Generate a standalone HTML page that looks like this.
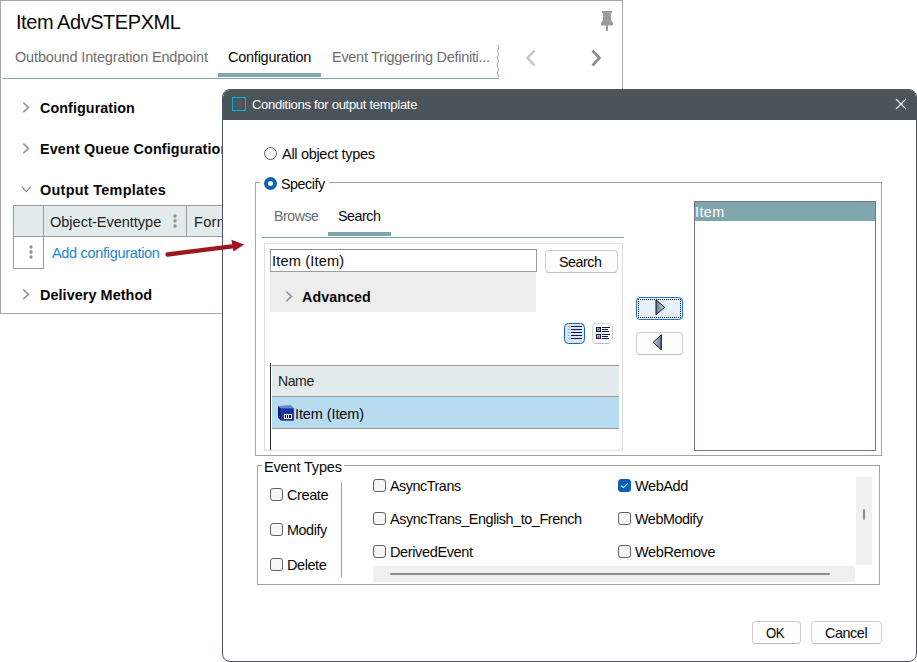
<!DOCTYPE html>
<html><head><meta charset="utf-8">
<style>
*{box-sizing:border-box;margin:0;padding:0}
html,body{width:917px;height:662px;overflow:hidden;background:#fff}
body{position:relative;font-family:"Liberation Sans",sans-serif;color:#111;font-size:14px}
.abs{position:absolute}
.t{position:absolute;white-space:nowrap;line-height:1}
.b{font-weight:bold}
#panel{left:0;top:0;width:623px;height:314px;border:1px solid #a6a6a6;background:#fff}
#dlg{left:222px;top:89px;width:695px;height:573px;background:#fff;border:1px solid #4b545b;border-radius:8px;overflow:hidden}
#tbar{left:-1px;top:-1px;width:697px;height:31px;background:#4b545b}
.btn{position:absolute;border:1px solid #d0d0d0;border-bottom-color:#bdbdbd;border-radius:4px;background:#fdfdfd}
.cb{position:absolute;width:13px;height:13px;border:1px solid #626262;border-radius:3px;background:#f6f6f6}
.rd{position:absolute;width:13px;height:13px;border:1px solid #626262;border-radius:50%;background:#f6f6f6}
svg{position:absolute;overflow:visible}
</style></head><body>
<!-- LEFT PANEL -->
<div id="panel" class="abs"></div>
<div class="abs" style="left:3px;top:78px;width:496px;height:1px;background:#7fa4ab"></div>
<div class="abs" style="left:218px;top:73px;width:103px;height:4px;background:#80a6ad"></div>
<!-- wavy cut -->
<svg style="left:495px;top:45px" width="6" height="33"><path d="M3 0 L4 3 L2.5 6 L4 9 L2 12 L3.5 16 L2 20 L3.5 24 L2.5 28 L4 32" fill="none" stroke="#8a8a8a" stroke-width="0.8"/></svg>
<!-- tab chevrons -->
<svg style="left:525px;top:49px" width="12" height="18"><path d="M9.5 1.5 L2.5 9 L9.5 16.5" fill="none" stroke="#cacaca" stroke-width="2.6"/></svg>
<svg style="left:590px;top:49px" width="12" height="18"><path d="M2.5 1.5 L9.5 9 L2.5 16.5" fill="none" stroke="#8c8c8c" stroke-width="2.6"/></svg>
<!-- pin -->
<svg style="left:600px;top:10px" width="14" height="22"><path d="M2 1 H12 V3 H11 V10 L13 13 V15.4 H8 V21 H6 V15.4 H1 V13 L3 10 V3 H2 Z" fill="#9b9b9b"/></svg>
<!-- section chevrons -->
<svg style="left:22px;top:101.500px" width="9" height="11"><path d="M1.3 0.7 L6.5 5.4 L1.3 10.1" fill="none" stroke="#959595" stroke-width="1.6"/></svg>
<svg style="left:22px;top:142.500px" width="9" height="11"><path d="M1.3 0.7 L6.5 5.4 L1.3 10.1" fill="none" stroke="#959595" stroke-width="1.6"/></svg>
<svg style="left:21px;top:186px" width="11" height="8"><path d="M0.8 0.8 L5.3 5.6 L9.8 0.8" fill="none" stroke="#888" stroke-width="1.2"/></svg>
<svg style="left:22px;top:288.500px" width="9" height="11"><path d="M1.3 0.7 L6.5 5.4 L1.3 10.1" fill="none" stroke="#959595" stroke-width="1.6"/></svg>
<!-- table -->
<div class="abs" style="left:13px;top:205px;width:215px;height:32px;background:#e2eaec;border:1px solid #9a9a9a"></div>
<div class="abs" style="left:43px;top:205px;width:1px;height:32px;background:#9a9a9a"></div>
<div class="abs" style="left:186px;top:205px;width:1px;height:32px;background:#9a9a9a"></div>
<div class="abs" style="left:13px;top:236px;width:31px;height:33px;border:1px solid #9a9a9a;background:#fff"></div>
<svg style="left:173px;top:214px" width="5" height="14"><circle cx="2" cy="2" r="1.7" fill="#909090"/><circle cx="2" cy="7" r="1.7" fill="#909090"/><circle cx="2" cy="12" r="1.7" fill="#909090"/></svg>
<svg style="left:29px;top:245px" width="5" height="14"><circle cx="2" cy="2" r="1.7" fill="#909090"/><circle cx="2" cy="7" r="1.7" fill="#909090"/><circle cx="2" cy="12" r="1.7" fill="#909090"/></svg>
<div class="t" style="left:16px;top:12px;color:#080808;font-size:20.3px;letter-spacing:-0.450px;transform:scaleX(0.9855);transform-origin:0 0;">Item AdvSTEPXML</div>
<div class="t" style="left:15px;top:50px;color:#6e6e6e;font-size:14.5px;letter-spacing:-0.157px;transform:scaleX(0.9995);transform-origin:0 0;">Outbound Integration Endpoint</div>
<div class="t" style="left:228px;top:50px;color:#080808;font-size:14.5px;letter-spacing:-0.233px;transform:scaleX(0.9976);transform-origin:0 0;">Configuration</div>
<div class="t" style="left:332px;top:50px;color:#6e6e6e;font-size:14.5px;letter-spacing:-0.311px;transform:scaleX(1.0026);transform-origin:0 0;">Event Triggering Definiti...</div>
<div class="t b" style="left:40px;top:101px;color:#080808;font-size:14.4px;letter-spacing:0.083px;transform:scaleX(0.9947);transform-origin:0 0;">Configuration</div>
<div class="t b" style="left:40px;top:142px;color:#080808;font-size:14.4px;letter-spacing:0.150px;transform:scaleX(0.9968);transform-origin:0 0;">Event Queue Configuration</div>
<div class="t b" style="left:40px;top:183px;color:#080808;font-size:14.4px;letter-spacing:0.280px;transform:scaleX(1.0024);transform-origin:0 0;">Output Templates</div>
<div class="t b" style="left:40px;top:288px;color:#080808;font-size:14.4px;letter-spacing:0.043px;transform:scaleX(1.0037);transform-origin:0 0;">Delivery Method</div>
<div class="t" style="left:50px;top:215px;color:#222;font-size:14.5px;letter-spacing:-0.027px;transform:scaleX(1.0037);transform-origin:0 0;">Object-Eventtype</div>
<div class="t" style="left:194px;top:215px;color:#222;font-size:14.5px;letter-spacing:0.333px;">Form</div>
<div class="t" style="left:52px;top:246px;color:#1c87c9;font-size:14.5px;letter-spacing:-0.325px;transform:scaleX(1.0019);transform-origin:0 0;">Add configuration</div>

<!-- DIALOG -->
<div id="dlg" class="abs">
  <div id="tbar" class="abs"></div>
</div>
<div class="abs" style="left:232px;top:97px;width:14px;height:14px;border:1px solid #0ab2cd"></div>
<svg style="left:895px;top:98px" width="12" height="12"><path d="M1 1 L11 11 M11 1 L1 11" stroke="#fff" stroke-width="1.1" fill="none"/></svg>

<div class="rd" style="left:264px;top:147px"></div>
<!-- fieldset specify -->
<div class="abs" style="left:255px;top:182px;width:627px;height:274px;border:1px solid #a2a2a2"></div>
<div class="abs" style="left:260px;top:176px;width:69px;height:14px;background:#fff"></div>
<div class="rd" style="left:264px;top:177px;border:4px solid #0f62b4;background:#fff"></div>
<div class="abs" style="left:328px;top:232px;width:63px;height:4px;background:#80a6ad"></div>
<div class="abs" style="left:262px;top:237px;width:362px;height:1px;background:#7fa4ab"></div>
<!-- search panel -->
<div class="abs" style="left:264px;top:243px;width:359px;height:208px;border:1px solid #dedede"></div>
<div class="abs" style="left:270px;top:249px;width:267px;height:23px;border:1px solid #9c9ca4;border-top-color:#8c8c94;background:#fff"></div>
<div class="abs" style="left:270px;top:272px;width:266px;height:39.500px;background:#ededed"></div>
<svg style="left:285px;top:290.700px" width="9" height="11"><path d="M1.3 0.7 L6.5 5.4 L1.3 10.1" fill="none" stroke="#959595" stroke-width="1.6"/></svg>
<div class="btn" style="left:545px;top:250px;width:73px;height:23px"></div>
<!-- view buttons -->
<div class="abs" style="left:564px;top:323px;width:21px;height:21px;border:1.500px solid #1a64a8;border-radius:4.500px;background:#d6e6f7"></div>
<svg style="left:564px;top:323px" width="21" height="21"><g stroke="#0a1a4a" stroke-width="1"><path d="M7 3.500 H18 M7 6.500 H18 M7 9.500 H18 M7 12.500 H18 M7 15.500 H18"/></g><g stroke="#9ab" stroke-width="1"><path d="M4 3.500 H5.500 M4 6.500 H5.500 M4 9.500 H5.500 M4 12.500 H5.500 M4 15.500 H5.500"/></g></svg>
<div class="abs" style="left:592px;top:323px;width:21px;height:21px;border:1px solid #d4d4d4;border-bottom-color:#bbb;border-radius:4.500px;background:#fff"></div>
<svg style="left:592px;top:323px" width="21" height="21"><rect x="4.500" y="4.500" width="4" height="4" fill="#7c3" stroke="#0a1a6a" stroke-width="1"/><rect x="4.500" y="11.500" width="4" height="4" fill="#cc3" stroke="#0a1a6a" stroke-width="1"/><path d="M5.500 7.500 L7.500 5.500" stroke="#e22" stroke-width="1"/><path d="M6.500 13 V15" stroke="#e22" stroke-width="1"/><g stroke="#0a1a4a" stroke-width="1"><path d="M10 4.500 H18 M10 6.500 H16 M10 8.500 H17 M10 11.500 H18 M10 13.500 H16 M10 15.500 H17"/></g></svg>
<div class="abs" style="left:609.500px;top:339.500px;width:5px;height:6px;background:#fff"></div>
<!-- list table -->
<div class="abs" style="left:270px;top:363px;width:1px;height:87px;background:#2a2a2a"></div>
<div class="abs" style="left:272px;top:365px;width:347px;height:32px;background:#e2eaec;border-top:1px solid #9a9a9a;border-bottom:1px solid #9a9a9a"></div>
<div class="abs" style="left:272px;top:397px;width:347px;height:32px;background:#b8dcef;border-bottom:1px solid #9a9a9a"></div>
<!-- cube icon -->
<svg style="left:278px;top:405px" width="16" height="16"><path d="M0 1 L3.100 3.200 V15.700 L0 12.500 Z" fill="#0b2376"/><path d="M0 1 L12.700 0 L15.900 3.200 H3.100 Z" fill="#6f86cf"/><rect x="3.100" y="3.200" width="12.800" height="12.500" fill="#1535a6"/><rect x="6" y="9" width="8" height="5" fill="#fff"/><rect x="7" y="10" width="1" height="3" fill="#000"/><rect x="9" y="10" width="1" height="3" fill="#000"/><rect x="11" y="10" width="2" height="3" fill="#000"/></svg>
<!-- arrow buttons -->
<div class="btn" style="left:636px;top:297px;width:47px;height:23px;border:1.500px solid #1a78d8;background:#e5f1fb"></div>
<div class="abs" style="left:638px;top:299px;width:43px;height:19px;border:1px dotted #000"></div>
<svg style="left:655px;top:299px" width="11" height="17"><defs><linearGradient id="g1" x1="0" x2="1"><stop offset="0" stop-color="#5d7894"/><stop offset="1" stop-color="#cfd8e2"/></linearGradient></defs><path d="M1 0.800 L9.600 8.300 L1 15.800 Z" fill="url(#g1)" stroke="#111" stroke-width="1"/></svg>
<div class="btn" style="left:636px;top:332px;width:47px;height:23px"></div>
<svg style="left:652px;top:334px" width="11" height="17"><defs><linearGradient id="g2" x1="1" x2="0"><stop offset="0" stop-color="#5d7894"/><stop offset="1" stop-color="#cfd8e2"/></linearGradient></defs><path d="M9.300 0.800 L1.200 8.300 L9.300 15.800 Z" fill="url(#g2)" stroke="#111" stroke-width="1"/></svg>
<!-- right list -->
<div class="abs" style="left:694px;top:201px;width:182px;height:250px;border:1px solid #737587;background:#fff"></div>
<div class="abs" style="left:695px;top:202px;width:180px;height:19px;background:#80a6ad"></div>
<!-- event types -->
<div class="abs" style="left:257px;top:465px;width:623px;height:120px;border:1px solid #a2a2a2"></div>
<div class="abs" style="left:262px;top:459px;width:82px;height:14px;background:#fff"></div>
<div class="cb" style="left:270px;top:488px"></div>
<div class="cb" style="left:270px;top:523px"></div>
<div class="cb" style="left:270px;top:558px"></div>
<div class="abs" style="left:341px;top:482px;width:1px;height:95px;background:#a0a0a0"></div>
<div class="cb" style="left:373px;top:479px"></div>
<div class="cb" style="left:373px;top:512px"></div>
<div class="cb" style="left:373px;top:545px"></div>
<div class="cb" style="left:618px;top:479px;background:#0660ba;border-color:#0660ba"></div>
<svg style="left:618px;top:479px" width="13" height="13"><path d="M3.100 6.600 L5.400 8.600 L9.900 4.400" fill="none" stroke="#eef4fb" stroke-width="1.050"/></svg>
<div class="cb" style="left:618px;top:512px"></div>
<div class="cb" style="left:618px;top:545px"></div>
<div class="abs" style="left:373px;top:566px;width:482px;height:16px;background:#f0f0f0"></div>
<div class="abs" style="left:390px;top:572.500px;width:440px;height:2.500px;background:#8c8c8c;border-radius:1px"></div>
<div class="abs" style="left:856px;top:477px;width:16px;height:88px;background:#f0f0f0"></div>
<div class="abs" style="left:863px;top:508.500px;width:2px;height:11.500px;background:#8c8c8c;border-radius:1px"></div>
<!-- ok cancel -->
<div class="btn" style="left:752px;top:621px;width:49px;height:23px"></div>
<div class="btn" style="left:811px;top:621px;width:71px;height:23px"></div>
<!-- red arrow -->
<svg style="left:160px;top:235px" width="90" height="25"><path d="M7.500 19.500 L76 10.800" stroke="#a0161f" stroke-width="4.300" stroke-linecap="round" fill="none"/><path d="M84.100 9.600 L71.400 4.800 L73.500 16.600 Z" fill="#a0161f"/></svg>
<div class="t" style="left:252px;top:98px;color:#fff;font-size:13px;letter-spacing:-0.290px;transform:scaleX(1.0025);transform-origin:0 0;">Conditions for output template</div>
<div class="t" style="left:282px;top:147px;color:#080808;font-size:14.5px;letter-spacing:-0.333px;transform:scaleX(1.0055);transform-origin:0 0;">All object types</div>
<div class="t" style="left:281px;top:177px;color:#080808;font-size:14.5px;letter-spacing:-0.450px;transform:scaleX(0.9866);transform-origin:0 0;">Specify</div>
<div class="t" style="left:274px;top:209px;color:#6e6e6e;font-size:14.5px;letter-spacing:-0.450px;transform:scaleX(0.9757);transform-origin:0 0;">Browse</div>
<div class="t" style="left:338px;top:209px;color:#080808;font-size:14.5px;letter-spacing:-0.450px;transform:scaleX(0.9834);transform-origin:0 0;">Search</div>
<div class="t" style="left:272px;top:254px;color:#080808;font-size:14.5px;letter-spacing:0.160px;transform:scaleX(1.0058);transform-origin:0 0;">Item (Item)</div>
<div class="t b" style="left:302px;top:290px;color:#080808;font-size:14.4px;letter-spacing:0.057px;transform:scaleX(0.9941);transform-origin:0 0;">Advanced</div>
<div class="t" style="left:559px;top:255px;color:#080808;font-size:14.5px;letter-spacing:-0.450px;transform:scaleX(0.9834);transform-origin:0 0;">Search</div>
<div class="t" style="left:278px;top:374px;color:#222;font-size:14.5px;letter-spacing:-0.450px;transform:scaleX(0.9697);transform-origin:0 0;">Name</div>
<div class="t" style="left:295px;top:407px;color:#080808;font-size:14.5px;letter-spacing:-0.100px;">Item (Item)</div>
<div class="t" style="left:695px;top:205px;color:#fff;font-size:14.5px;letter-spacing:0.400px;transform:scaleX(0.9932);transform-origin:0 0;">Item</div>
<div class="t" style="left:264px;top:460px;color:#080808;font-size:14.5px;letter-spacing:-0.140px;transform:scaleX(0.9987);transform-origin:0 0;">Event Types</div>
<div class="t" style="left:287px;top:488px;color:#080808;font-size:14.5px;letter-spacing:-0.450px;transform:scaleX(1.0053);transform-origin:0 0;">Create</div>
<div class="t" style="left:287px;top:523px;color:#080808;font-size:14.5px;letter-spacing:-0.450px;transform:scaleX(0.9923);transform-origin:0 0;">Modify</div>
<div class="t" style="left:287px;top:558px;color:#080808;font-size:14.5px;letter-spacing:-0.450px;transform:scaleX(1.0029);transform-origin:0 0;">Delete</div>
<div class="t" style="left:390px;top:479px;color:#080808;font-size:14.5px;letter-spacing:-0.450px;transform:scaleX(0.9876);transform-origin:0 0;">AsyncTrans</div>
<div class="t" style="left:390px;top:512px;color:#080808;font-size:14.5px;letter-spacing:-0.450px;transform:scaleX(0.9964);transform-origin:0 0;">AsyncTrans_English_to_French</div>
<div class="t" style="left:390px;top:545px;color:#080808;font-size:14.5px;letter-spacing:-0.382px;transform:scaleX(1.0025);transform-origin:0 0;">DerivedEvent</div>
<div class="t" style="left:635px;top:479px;color:#080808;font-size:14.5px;letter-spacing:-0.400px;">WebAdd</div>
<div class="t" style="left:635px;top:512px;color:#080808;font-size:14.5px;letter-spacing:-0.450px;transform:scaleX(0.9914);transform-origin:0 0;">WebModify</div>
<div class="t" style="left:635px;top:545px;color:#080808;font-size:14.5px;letter-spacing:-0.375px;">WebRemove</div>
<div class="t" style="left:766px;top:626px;color:#080808;font-size:14.5px;letter-spacing:-0.450px;transform:scaleX(0.9061);transform-origin:0 0;">OK</div>
<div class="t" style="left:825px;top:626px;color:#080808;font-size:14.5px;letter-spacing:-0.440px;transform:scaleX(0.9927);transform-origin:0 0;">Cancel</div>
</body></html>
